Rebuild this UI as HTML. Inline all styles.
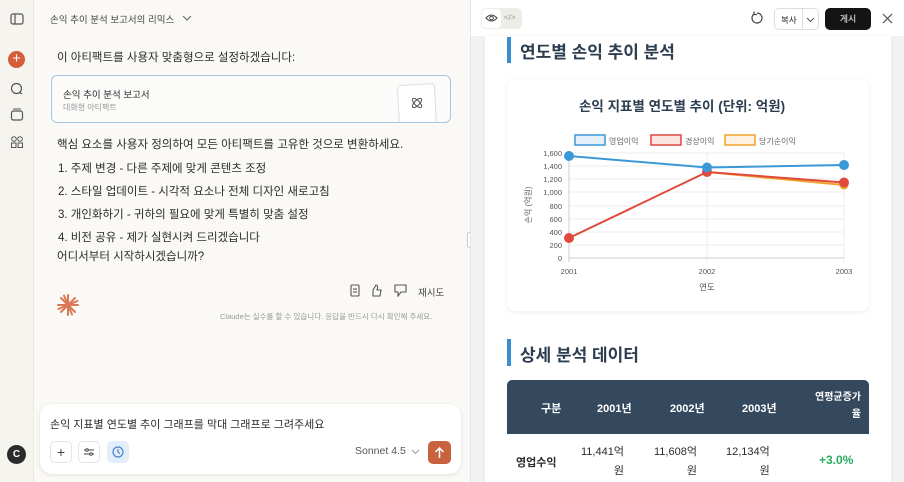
<!DOCTYPE html>
<html><head><meta charset="utf-8"><style>
*{margin:0;padding:0;box-sizing:border-box}
body{width:904px;height:482px;overflow:hidden;font-family:"Liberation Sans","Noto Sans CJK KR",sans-serif;background:#faf9f5;position:relative;color:#222}
.abs{position:absolute}
.side{left:0;top:0;width:34px;height:482px;background:#f5f4ef;border-right:1px solid #ebe9e2}
.chat{left:34px;top:0;width:436px;height:482px;background:#faf9f5}
.right{left:470px;top:0;width:434px;height:482px;background:#f2f2f2;border-left:1px solid #e5e5e5}
.t{font-size:11.5px;color:#2b2b2b;white-space:nowrap}
</style></head><body>
<div class="abs side">
 <svg class="abs" style="left:10px;top:13px" width="14" height="12"><rect x="1" y="1" width="12" height="10" rx="2" fill="none" stroke="#555" stroke-width="1.2"/><line x1="5" y1="1" x2="5" y2="11" stroke="#555" stroke-width="1.2"/></svg>
 <div class="abs" style="left:8px;top:51px;width:17px;height:17px;border-radius:50%;background:#d45d3c;color:#fff;font-size:15px;line-height:16px;text-align:center">+</div>
 <svg class="abs" style="left:10px;top:82px" width="14" height="14"><circle cx="6.5" cy="6.5" r="5" fill="none" stroke="#555" stroke-width="1.2"/><path d="M9 10 L12 12" stroke="#555" stroke-width="1.2"/></svg>
 <svg class="abs" style="left:10px;top:108px" width="14" height="13"><rect x="1.5" y="3" width="11" height="9" rx="2" fill="none" stroke="#555" stroke-width="1.2"/><line x1="3" y1="1" x2="11" y2="1" stroke="#555"/></svg>
 <svg class="abs" style="left:10px;top:135px" width="14" height="14"><circle cx="4" cy="4" r="2.3" fill="none" stroke="#555"/><circle cx="10" cy="4" r="2.3" fill="none" stroke="#555"/><rect x="1.5" y="8" width="4.5" height="4.5" fill="none" stroke="#555"/><rect x="8" y="8" width="4.5" height="4.5" fill="none" stroke="#555"/></svg>
 <div class="abs" style="left:7px;top:445px;width:19px;height:19px;border-radius:50%;background:#2b2b2b;color:#fff;font-size:10px;font-weight:bold;line-height:19px;text-align:center">C</div>
</div>
<div class="abs chat">
 <div class="abs t" style="left:16px;top:12px;font-size:9.5px;color:#444">손익 추이 분석 보고서의 리믹스</div>
 <svg class="abs" style="left:148px;top:15px" width="10" height="7"><path d="M1 1 L5 5 L9 1" fill="none" stroke="#666" stroke-width="1.1"/></svg>
 <div class="abs t" style="left:23px;top:49px">이 아티팩트를 사용자 맞춤형으로 설정하겠습니다:</div>
 <div class="abs" style="left:17px;top:75px;width:400px;height:48px;border:1px solid #a9c6e8;border-radius:6px;background:#fbfbf9;overflow:hidden">
  <div class="abs t" style="left:11px;top:11px;font-size:9.5px">손익 추이 분석 보고서</div>
  <div class="abs t" style="left:11px;top:26px;font-size:8px;color:#999">대화형 아티팩트</div>
  <div class="abs" style="left:346px;top:8px;width:38px;height:44px;border:1px solid #ddd;border-radius:4px;background:#fff;transform:rotate(-3deg)"></div>
  <svg class="abs" style="left:358px;top:20px" width="14" height="14"><ellipse cx="7" cy="7" rx="6" ry="2.5" fill="none" stroke="#555" transform="rotate(45 7 7)"/><ellipse cx="7" cy="7" rx="6" ry="2.5" fill="none" stroke="#555" transform="rotate(-45 7 7)"/></svg>
 </div>
 <div class="abs t" style="left:23px;top:136px">핵심 요소를 사용자 정의하여 모든 아티팩트를 고유한 것으로 변환하세요.</div>
 <div class="abs t" style="left:24px;top:160px">1. 주제 변경 - 다른 주제에 맞게 콘텐츠 조정</div>
 <div class="abs t" style="left:24px;top:183px">2. 스타일 업데이트 - 시각적 요소나 전체 디자인 새로고침</div>
 <div class="abs t" style="left:24px;top:206px">3. 개인화하기 - 귀하의 필요에 맞게 특별히 맞춤 설정</div>
 <div class="abs t" style="left:24px;top:229px">4. 비전 공유 - 제가 실현시켜 드리겠습니다</div>
 <div class="abs t" style="left:23px;top:248px">어디서부터 시작하시겠습니까?</div>
 <svg class="abs" style="left:22px;top:293px" width="24" height="24"><g stroke="#d97757" stroke-width="2" stroke-linecap="round"><line x1="12" y1="2" x2="12" y2="22"/><line x1="2" y1="12" x2="22" y2="12"/><line x1="5" y1="5" x2="19" y2="19"/><line x1="19" y1="5" x2="5" y2="19"/><line x1="8" y1="2.5" x2="16" y2="21.5"/><line x1="2.5" y1="16" x2="21.5" y2="8"/></g></svg>
 <svg class="abs" style="left:315px;top:283px" width="80" height="14" fill="none" stroke="#555" stroke-width="1.1">
  <rect x="2" y="2" width="8" height="11" rx="1"/><line x1="4" y1="6" x2="8" y2="6"/><line x1="4" y1="9" x2="8" y2="9"/>
  <path d="M24 13 V7 L27 2 Q29 2 28.5 5 L28 7 H32 L31 13 Z"/>
  <path d="M46 2 H57 V9 H52 L49 13 V9 H46 Z"/>
 </svg>
 <div class="abs t" style="left:384px;top:285px;font-size:9.5px;color:#444">재시도</div>
 <div class="abs t" style="left:186px;top:311px;font-size:7.5px;color:#999">Claude는 실수를 할 수 있습니다. 응답을 반드시 다시 확인해 주세요.</div>
 <div class="abs" style="left:6px;top:404px;width:421px;height:70px;background:#fff;border-radius:12px;box-shadow:0 1px 4px rgba(0,0,0,.1)">
  <div class="abs t" style="left:10px;top:12px;font-size:11px">손익 지표별 연도별 추이 그래프를 막대 그래프로 그려주세요</div>
  <div class="abs" style="left:10px;top:37px;width:22px;height:22px;border:1px solid #e5e5e5;border-radius:5px;text-align:center;line-height:20px;font-size:14px;color:#444">+</div>
  <div class="abs" style="left:38px;top:37px;width:22px;height:22px;border:1px solid #e5e5e5;border-radius:5px"></div>
  <svg class="abs" style="left:43px;top:43px" width="12" height="10" stroke="#444" fill="none"><line x1="1" y1="3" x2="11" y2="3"/><line x1="1" y1="7" x2="11" y2="7"/><circle cx="4" cy="3" r="1.3" fill="#fff"/><circle cx="8" cy="7" r="1.3" fill="#fff"/></svg>
  <div class="abs" style="left:67px;top:37px;width:22px;height:22px;background:#e3eefb;border-radius:5px"></div>
  <svg class="abs" style="left:72px;top:42px" width="12" height="12" fill="none" stroke="#4a84c8" stroke-width="1.2"><circle cx="6" cy="6" r="5"/><path d="M6 3 V6 L8 7.5"/></svg>
  <div class="abs t" style="left:315px;top:41px;font-size:10.5px;color:#555">Sonnet 4.5</div>
  <svg class="abs" style="left:371px;top:45px" width="9" height="6"><path d="M1 1 L4.5 4.5 L8 1" fill="none" stroke="#999"/></svg>
  <div class="abs" style="left:388px;top:37px;width:23px;height:23px;background:#c9623f;border-radius:5px"></div>
  <svg class="abs" style="left:394px;top:42px" width="11" height="13" stroke="#fff" stroke-width="1.5" fill="none"><path d="M5.5 12 V2 M1.5 6 L5.5 2 L9.5 6"/></svg>
 </div>
</div>
<div class="abs" style="left:467px;top:232px;width:5px;height:16px;border:1px solid #ccc;border-radius:3px;background:#fff"></div>
<div class="abs right">
 <div class="abs" style="left:0;top:0;width:434px;height:36px;background:#fff"></div>
 <div class="abs" style="left:10px;top:8px;width:41px;height:21px;background:#eeece6;border-radius:5px"></div>
 <div class="abs" style="left:11px;top:9px;width:19px;height:19px;background:#fff;border-radius:4px"></div>
 <svg class="abs" style="left:14px;top:13px" width="13" height="10" fill="none" stroke="#444"><path d="M1 5 Q6.5 -1 12 5 Q6.5 11 1 5 Z"/><circle cx="6.5" cy="5" r="1.8"/></svg>
 <div class="abs t" style="left:33px;top:13px;font-size:8px;color:#999">&lt;/&gt;</div>
 <svg class="abs" style="left:279px;top:11px" width="14" height="14" fill="none" stroke="#444" stroke-width="1.2"><path d="M4 3 A5 5 0 1 0 7 2"/><path d="M4 0.5 V3.5 H7"/></svg>
 <div class="abs" style="left:303px;top:8px;width:45px;height:22px;border:1px solid #ddd;border-radius:5px;background:#fff"><span class="abs t" style="left:6px;top:5px;font-size:8.5px">복사</span><span class="abs" style="left:27px;top:0;width:1px;height:20px;background:#ddd"></span></div>
 <svg class="abs" style="left:335px;top:17px" width="9" height="6"><path d="M1 1 L4.5 4.5 L8 1" fill="none" stroke="#555"/></svg>
 <div class="abs" style="left:354px;top:8px;width:46px;height:22px;background:#141414;border-radius:5px;color:#fff;font-size:9px;text-align:center;line-height:22px">게시</div>
 <svg class="abs" style="left:411px;top:13px" width="11" height="11" stroke="#555" stroke-width="1.2"><path d="M1 1 L10 10 M10 1 L1 10"/></svg>
 <div class="abs" style="left:14px;top:36px;width:406px;height:446px;background:#fff;box-shadow:0 0 4px rgba(0,0,0,.06)"></div>
 <div class="abs" style="left:36px;top:37px;width:4px;height:26px;background:#3a8fd2"></div>
 <div class="abs t" style="left:49px;top:38px;font-size:17px;font-weight:bold;color:#2c3e50">연도별 손익 추이 분석</div>
 <div class="abs" style="left:36px;top:79px;width:362px;height:232px;background:#fff;border-radius:8px;box-shadow:0 1px 5px rgba(0,0,0,.08)"></div>
 <div class="abs t" style="left:108px;top:95px;font-size:13.5px;font-weight:bold;color:#2c3e50">손익 지표별 연도별 추이 (단위: 억원)</div>
 <svg class="abs" style="left:0;top:0" width="434" height="300" font-family="Liberation Sans, Noto Sans CJK KR, sans-serif">
  <g font-size="8" fill="#666">
   <rect x="104" y="135" width="30" height="10" fill="#e4f1fb" stroke="#3a98d8" stroke-width="1.5"/><text x="138" y="144">영업이익</text>
   <rect x="180" y="135" width="30" height="10" fill="#fbe4e2" stroke="#e0493c" stroke-width="1.5"/><text x="214" y="144">경상이익</text>
   <rect x="254" y="135" width="30" height="10" fill="#fdf1df" stroke="#f0a32a" stroke-width="1.5"/><text x="288" y="144">당기순이익</text>
  </g>
  <g stroke="#ececec" stroke-width="1">
   <line x1="98" y1="153" x2="373" y2="153"/><line x1="98" y1="166" x2="373" y2="166"/><line x1="98" y1="179" x2="373" y2="179"/><line x1="98" y1="192" x2="373" y2="192"/><line x1="98" y1="206" x2="373" y2="206"/><line x1="98" y1="219" x2="373" y2="219"/><line x1="98" y1="232" x2="373" y2="232"/><line x1="98" y1="245" x2="373" y2="245"/>
   <line x1="236" y1="153" x2="236" y2="262"/><line x1="373" y1="153" x2="373" y2="262"/>
  </g>
  <line x1="98" y1="258" x2="373" y2="258" stroke="#ccc"/><line x1="98" y1="153" x2="98" y2="262" stroke="#ccc"/>
  <g font-size="7.5" fill="#555" text-anchor="end">
   <text x="91" y="156">1,600</text><text x="91" y="169">1,400</text><text x="91" y="182">1,200</text><text x="91" y="195">1,000</text><text x="91" y="209">800</text><text x="91" y="222">600</text><text x="91" y="235">400</text><text x="91" y="248">200</text><text x="91" y="261">0</text>
  </g>
  <g font-size="7.5" fill="#555" text-anchor="middle"><text x="98" y="274">2001</text><text x="236" y="274">2002</text><text x="373" y="274">2003</text><text x="236" y="290" font-size="8.5">연도</text></g>
  <text transform="translate(60,205) rotate(-90)" font-size="8" fill="#666" text-anchor="middle">손익 (억원)</text>
  <polyline points="236,172 373,185" fill="none" stroke="#f0a32a" stroke-width="2"/><circle cx="373" cy="185" r="4.5" fill="#f0a32a"/>
  <polyline points="98,238 236,172 373,182.5" fill="none" stroke="#e0493c" stroke-width="2"/>
  <circle cx="98" cy="238" r="5" fill="#e0493c"/><circle cx="236" cy="172" r="5" fill="#e0493c"/><circle cx="373" cy="182.5" r="5" fill="#e0493c"/>
  <polyline points="98,156 236,167.5 373,165" fill="none" stroke="#3a98d8" stroke-width="2"/>
  <circle cx="98" cy="156" r="5" fill="#3a98d8"/><circle cx="236" cy="167.5" r="5" fill="#3a98d8"/><circle cx="373" cy="165" r="5" fill="#3a98d8"/>
 </svg>
 <div class="abs" style="left:36px;top:339px;width:4px;height:27px;background:#3a8fd2"></div>
 <div class="abs t" style="left:49px;top:341px;font-size:17px;font-weight:bold;color:#2c3e50">상세 분석 데이터</div>
 <div class="abs" style="left:36px;top:380px;width:362px;height:54px;background:#34495e;border-radius:5px 5px 0 0;color:#fff;font-weight:bold;font-size:11px">
  <span class="abs" style="left:34px;top:20px">구분</span><span class="abs" style="left:90px;top:20px">2001년</span><span class="abs" style="left:163px;top:20px">2002년</span><span class="abs" style="left:235px;top:20px">2003년</span>
  <span class="abs" style="left:300px;top:9px;font-size:10px;text-align:right;width:54px;line-height:17px">연평균증가<br>율</span>
 </div>
 <div class="abs t" style="left:45px;top:454px;font-weight:bold;font-size:11px">영업수익</div>
 <div class="abs t" style="left:110px;top:443px;font-size:11px;text-align:right;line-height:19px">11,441억<br>원</div>
 <div class="abs t" style="left:183px;top:443px;font-size:11px;text-align:right;line-height:19px">11,608억<br>원</div>
 <div class="abs t" style="left:255px;top:443px;font-size:11px;text-align:right;line-height:19px">12,134억<br>원</div>
 <div class="abs t" style="left:348px;top:453px;font-size:12px;font-weight:bold;color:#27ae60">+3.0%</div>
</div>
</body></html>
